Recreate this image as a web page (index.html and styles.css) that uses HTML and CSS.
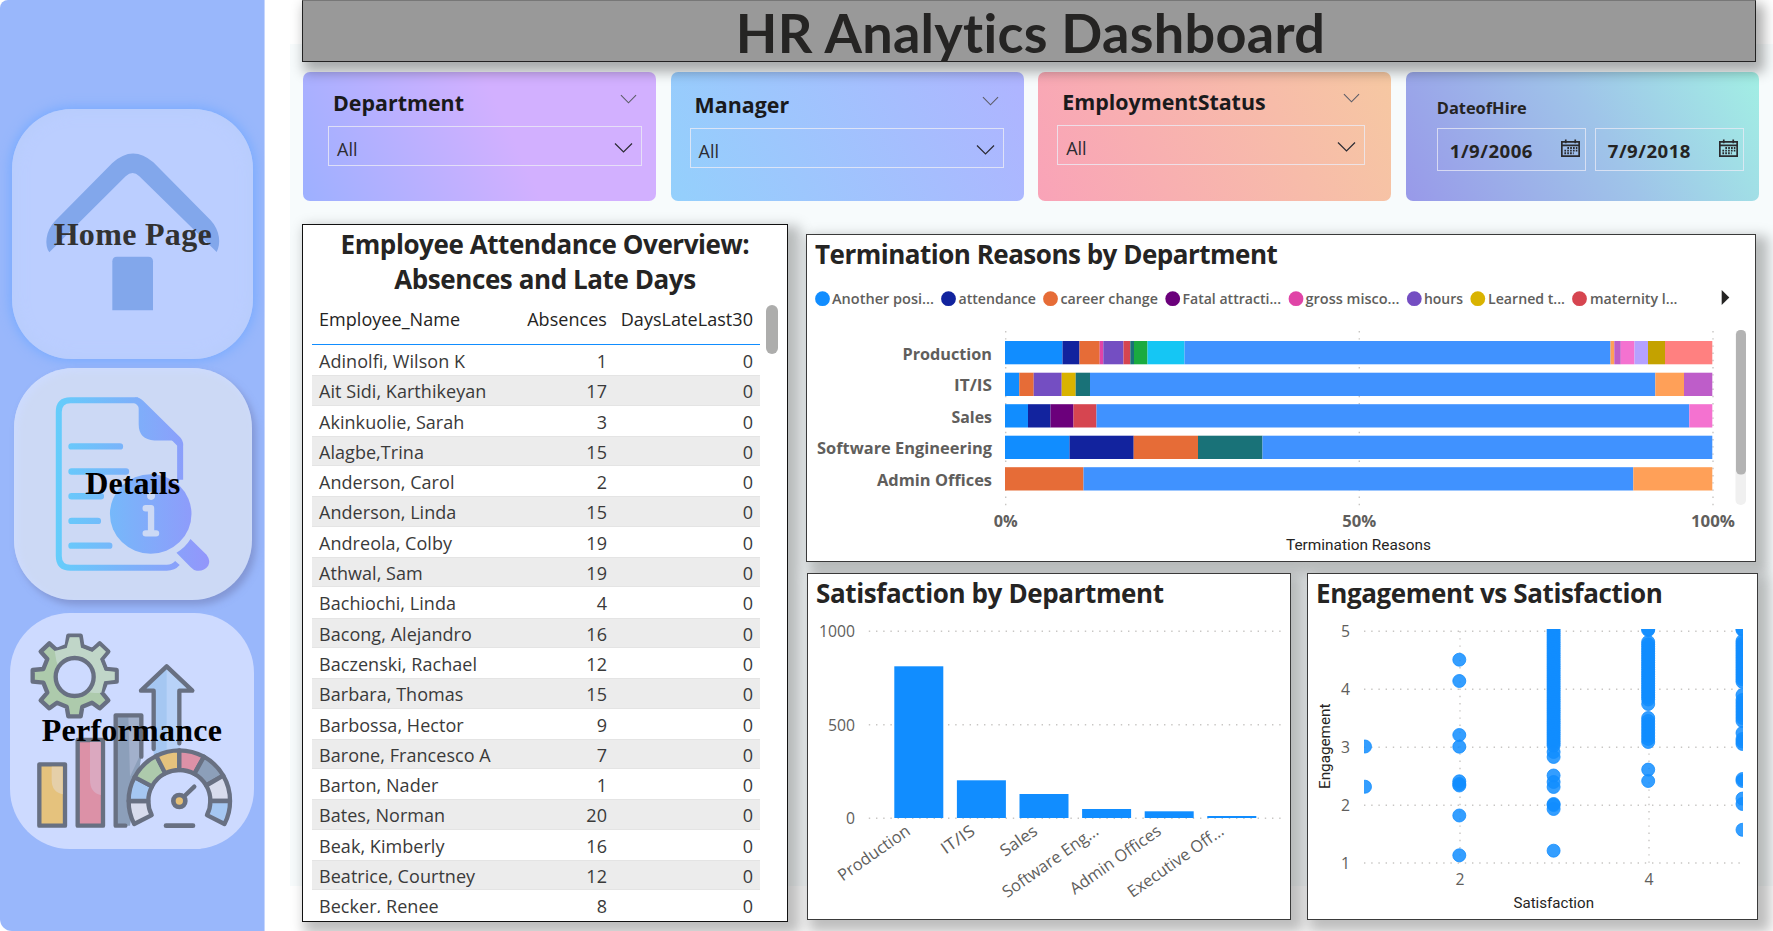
FILE: index.html
```html
<!DOCTYPE html>
<html lang="en">
<head>
<meta charset="utf-8">
<title>HR Analytics Dashboard</title>
<link rel="stylesheet" href="styles.css">
</head>
<body>
<nav class="sidebar">
  <a class="tile tile-home">
    <svg class="tile-art" viewBox="36 88 723 750">
      <path class="house" d="M148 518C133 497 136 455 165 424L337 250Q398 194 460 248L632 422C661 453 663 494 650 517L418 290Q398 270 377 290Z"/>
      <path class="house" d="M337 692V545Q337 531 351 531H445Q459 531 459 545V692Z"/>
      <text class="tile-label soft" x="161" y="496" textLength="474">Home Page</text>
    </svg>
  </a>
  <a class="tile tile-details">
    <svg class="tile-art" viewBox="43 54 712 693">
      <defs>
        <linearGradient id="doc" gradientUnits="userSpaceOnUse" x1="168" y1="0" x2="627" y2="0">
          <stop offset="0" stop-color="#64cdfb"/><stop offset=".5" stop-color="#7db0fa"/><stop offset="1" stop-color="#9396fb"/>
        </linearGradient>
      </defs>
      <path d="M540 388V282L410 150H212Q177 150 177 185V616Q177 651 212 651H500Q520 651 532 637" fill="none" stroke="url(#doc)" stroke-width="18"/>
      <path d="M405 142Q420 142 430 152L540 261Q549 270 549 285H531Q531 270 515 270H463Q416 268 416 222V176Q416 160 403 159Z" fill="url(#doc)"/>
      <path d="M215 288H360M215 363H378M215 437H303M215 511H294M215 585H328" fill="none" stroke="url(#doc)" stroke-width="19" stroke-linecap="round"/>
      <ellipse cx="452" cy="490" rx="122" ry="119" fill="url(#doc)"/>
      <path d="M571 565L619 612Q632 630 624 645Q612 662 590 660Q580 659 571 649L529 606Q556 590 571 565Z" fill="url(#doc)"/>
      <circle cx="453" cy="436" r="12" fill="#ccd9f5"/>
      <path d="M437 473H453V548M437 548H468" fill="none" stroke="#ccd9f5" stroke-width="19" stroke-linecap="round" stroke-linejoin="round"/>
      <text class="tile-label" x="256" y="431" textLength="284">Details</text>
    </svg>
  </a>
  <a class="tile tile-performance">
    <svg class="tile-art" viewBox="30 69 732 708">
      <g stroke="#687082" stroke-width="13" stroke-linejoin="round" stroke-linecap="round">
        <path fill="#adcaac" d="M205 137H242L247 168L277 180L299 160L325 185L306 207L318 237L350 240V275L318 278L306 308L325 331L299 355L276 338L247 350L242 379H205L200 350L171 338L148 355L122 331L142 308L130 278L98 275V240L130 237L142 207L122 185L148 160L170 180L200 168Z"/>
        <path fill="#c0d6c8" stroke="none" d="M164 183L200 174L209 142H238L243 173L277 186L299 167L318 185L300 207L314 242L344 245V270L312 274L304 308Q180 320 164 183Z"/>
        <circle cx="224" cy="261" r="57" fill="#cddaff"/>
        <path fill="#a5c7f2" stroke="none" d="M461 500V302H423L500 229L577 302H538V500Z"/>
        <path fill="#b8d2f8" stroke="none" d="M500 229L577 302H538V500H500Z"/>
        <path fill="none" d="M461 477V302H423L500 229L577 302H538V460"/>
        <path fill="#8c9fba" stroke="none" d="M347 376H424V500L390 707H347Z"/>
        <path fill="#a2b0cb" stroke="none" d="M385 382H418V500L390 560Z"/>
        <path fill="none" d="M424 500V376H347V707H376"/>
        <path fill="#dc91a7" d="M233 450H309V707H233Z"/>
        <path fill="#dba8bf" stroke="none" d="M270 456H302V615Q270 608 270 570Z"/>
        <path fill="#e5c27d" d="M118 523H195V707H118Z"/>
        <path fill="#e5cfa9" stroke="none" d="M155 530H188V613Q155 606 155 570Z"/>
      </g>
      <g id="gauge" stroke="#687082" stroke-width="13" stroke-linejoin="round"></g>
      <path d="M538 633L583 590" stroke="#687082" stroke-width="13" stroke-linecap="round"/>
      <circle cx="538" cy="633" r="18" fill="#e5bf76" stroke="#687082" stroke-width="14"/>
      <path d="M498 707H579" stroke="#687082" stroke-width="14" stroke-linecap="round"/>
      <text class="tile-label" x="125" y="452" textLength="541">Performance</text>
    </svg>
  </a>
</nav>

<main class="main">
  <header class="banner"><h1>HR Analytics Dashboard</h1></header>

  <section class="slicers">
    <div class="slicer department">
      <div class="slicer-head"><span>Department</span><svg class="chev small" viewBox="0 0 18 10"><path d="M1 1L9 9L17 1"/></svg></div>
      <div class="select"><span>All</span><svg class="chev" viewBox="0 0 18 10"><path d="M.5 .5L9 9L17.5 .5"/></svg></div>
    </div>
    <div class="slicer manager">
      <div class="slicer-head"><span>Manager</span><svg class="chev small" viewBox="0 0 18 10"><path d="M1 1L9 9L17 1"/></svg></div>
      <div class="select"><span>All</span><svg class="chev" viewBox="0 0 18 10"><path d="M.5 .5L9 9L17.5 .5"/></svg></div>
    </div>
    <div class="slicer status">
      <div class="slicer-head"><span>EmploymentStatus</span><svg class="chev small" viewBox="0 0 18 10"><path d="M1 1L9 9L17 1"/></svg></div>
      <div class="select"><span>All</span><svg class="chev" viewBox="0 0 18 10"><path d="M.5 .5L9 9L17.5 .5"/></svg></div>
    </div>
    <div class="slicer hire">
      <div class="hire-head">DateofHire</div>
      <div class="dates">
        <div class="date"><span>1/9/2006</span><svg class="cal" viewBox="0 0 18 18"><path d="M.8 2.8H17.2V16.2H.8ZM.8 6H17.2M4.5 .5V4M13.5 .5V4"/><path class="days" d="M6 8.5H15.5M3.2 11H15.5M3.2 13.5H12"/></svg></div>
        <div class="date"><span>7/9/2018</span><svg class="cal" viewBox="0 0 18 18"><path d="M.8 2.8H17.2V16.2H.8ZM.8 6H17.2M4.5 .5V4M13.5 .5V4"/><path class="days" d="M6 8.5H15.5M3.2 11H15.5M3.2 13.5H12"/></svg></div>
      </div>
    </div>
  </section>

  <div class="content">
    <section class="panel attendance">
      <h2>Employee Attendance Overview:<br>Absences and Late Days</h2>
      <div class="table-wrap">
        <div class="table">
          <div class="row head"><span>Employee_Name</span><span>Absences</span><span>DaysLateLast30</span></div>
          <div class="rows" id="rows"></div>
        </div>
        <div class="thumb"></div>
      </div>
    </section>

    <div class="charts">
      <section class="panel termination">
        <h2>Termination Reasons by Department</h2>
        <svg id="termination" width="948" height="276" viewBox="807 285 948 276"></svg>
      </section>
      <div class="bottom">
        <section class="panel satisfaction">
          <h2>Satisfaction by Department</h2>
          <svg id="satisfaction" width="482" height="297" viewBox="808 622 482 297"></svg>
        </section>
        <section class="panel engagement">
          <h2>Engagement vs Satisfaction</h2>
          <svg id="engagement" width="449" height="297" viewBox="1308 622 449 297"></svg>
        </section>
      </div>
    </div>
  </div>
</main>
<script src="script.js"></script>
</body>
</html>
```
FILE: styles.css
```css
* { box-sizing: border-box; }
body {
  margin: 0;
  width: 1773px;
  height: 931px;
  overflow: hidden;
  display: flex;
  background: #fff;
  font-family: "Open Sans", "Noto Sans", sans-serif;
  color: #252423;
}
h1, h2 { margin: 0; }

.sidebar {
  width: 265px;
  height: 931px;
  flex: none;
  padding-top: 109px;
  background: #99b7fb;
  border-right: 1px solid #c6d6fd;
  border-radius: 8px 0 0 12px;
}
.tile { display: block; border-radius: 60px; }
.tile-art { display: block; width: 100%; height: 100%; }
.tile-home {
  width: 241px; height: 250px; margin-left: 12px;
  background: #bbceff;
  box-shadow: 0 0 12px 2px #78abff, inset 0 0 16px 2px #b7ccfb;
}
.tile-details {
  width: 238px; height: 232px; margin: 9px 0 0 14px;
  background: #ccd9f5;
  box-shadow: 4px 5px 7px rgba(110, 120, 175, .5), inset 3px 3px 8px #cddbff;
}
.tile-performance {
  width: 244px; height: 236px; margin: 13px 0 0 10px;
  background: #cddaff;
}
.tile-label { font: bold 96px "Liberation Serif", serif; fill: #000; }
.tile-label.soft { fill: #323232; }
.house { fill: #82a7eb; }

.main {
  flex: 1;
  padding-left: 37px;
  background: linear-gradient(#f7fbfc, #f7fbfc) 25px 44px / 1483px 842px no-repeat #fff;
}
.banner {
  position: relative;
  z-index: 1;
  width: 1454px;
  height: 62px;
  border: 1px solid #222;
  border-top-color: #777;
  background: #999;
  box-shadow: 5px 7px 12px 3px rgba(0, 0, 0, .32);
  display: flex;
  justify-content: center;
}
.banner h1 {
  font-family: Lato, "Open Sans", sans-serif;
  font-size: 54px;
  font-weight: 700;
  line-height: 63px;
  letter-spacing: .3px;
  padding-left: 3px;
  white-space: nowrap;
}

.slicers {
  margin: 10px 0 0 1px;
  display: grid;
  grid-template-columns: repeat(4, 353px);
  column-gap: 14.6px;
}
.slicer { height: 129px; border-radius: 7px; }
.department { background: linear-gradient(65deg, #9db0ff, #d2b0ff 58%); padding: 23px 14px 0 25px; }
.manager { background: linear-gradient(65deg, #94d0fc, #afb4ff); padding: 25px 20px 0 19px; }
.status { background: linear-gradient(65deg, #f9a3b8, #f6c8a2); padding: 22px 26px 0 19px; }
.hire { background: linear-gradient(60deg, #9899e9, #9fc4e9 55%, #a2efe4); padding: 27px 14px 0 31px; }
.slicer-head {
  display: flex;
  justify-content: space-between;
  height: 31px;
  padding-left: 5px;
  font-size: 21.4px;
  font-weight: 700;
  line-height: 16px;
  color: #1a1a1c;
}
.chev { width: 19px; height: 10px; fill: none; stroke: #2b2b33; stroke-width: 1.2; }
.chev.small { width: 17px; height: 10px; margin: -1px 5px 0 0; stroke: #5d5d68; }
.select {
  height: 40px;
  border: 1px solid rgba(235, 235, 245, .8);
  padding: 5px 8px 0 8px;
  display: flex;
  justify-content: space-between;
  align-items: center;
  font-size: 18px;
  line-height: 34px;
  color: #2c2c33;
}
.select .chev { margin-top: -1px; }
.hire-head { height: 29px; font-size: 16.4px; font-weight: 700; line-height: 17px; }
.dates { display: grid; grid-template-columns: 149px 149px; column-gap: 9px; }
.date {
  height: 43px;
  border: 1px solid rgba(235, 235, 245, .75);
  padding: 2px 5px 0 12px;
  display: flex;
  justify-content: space-between;
  align-items: center;
  font-size: 18.6px;
  letter-spacing: .5px;
  font-weight: 700;
}
.cal { width: 19px; height: 19px; margin-bottom: 4px; fill: none; stroke: #2a2a2e; stroke-width: 1.6; }
.cal .days { stroke-dasharray: 1.6 1.1; stroke-width: 1.8; }

.content { display: flex; margin-top: 23px; }
.panel {
  background: #fff;
  border: 1px solid #3a3a3a;
  box-shadow: 7px 7px 12px 5px rgba(0, 0, 0, .26);
}
.panel h2 { font-size: 26px; font-weight: 700; letter-spacing: -.5px; white-space: nowrap; }
.bottom h2 { font-size: 26px; }
.panel svg { display: block; }
.attendance { width: 486px; height: 698px; padding: 2px 9px 0; border-color: #111; }
.attendance h2 { text-align: center; line-height: 35px; letter-spacing: -.42px; }
.table-wrap { display: flex; height: 617px; }
.table { width: 449px; margin-top: 10px; overflow: hidden; height: 606px; font-size: 18px; letter-spacing: .05px; }
.row {
  display: grid;
  grid-template-columns: 201px 87px 146px;
  padding-left: 7px;
  height: 30.3px;
  line-height: 32px;
  color: #3a3a3a;
  white-space: nowrap;
}
.row span + span { text-align: right; }
.head { height: 38px; line-height: 25px; border-bottom: 1px solid #118dff; color: #252423; }
.rows .row:nth-child(even) { background: #ececec; box-shadow: inset 0 1px #e4e4e4, inset 0 -1px #e4e4e4; }
.thumb { width: 12px; height: 49px; margin: 8px 0 0 6px; border-radius: 6px; background: #adadac; }

.charts { margin-left: 18px; padding-top: 10px; }
.termination { width: 950px; height: 328px; }
.termination h2 { height: 50px; line-height: 38px; padding-left: 8px; }
.bottom { display: flex; gap: 16px; margin: 11px 0 0 1px; }
.satisfaction { width: 484px; height: 347px; }
.engagement { width: 451px; height: 347px; }
.bottom .panel h2 { height: 48px; line-height: 39px; padding-left: 8px; letter-spacing: -.38px; }

.legend { font-size: 14.7px; font-weight: 600; fill: #605e5c; }
.category { font-size: 16.5px; font-weight: 700; fill: #605e5c; }
.tick { font-size: 16.5px; fill: #605e5c; }
.tick-bold { font-size: 16.5px; font-weight: 700; fill: #605e5c; }
.axis-title { font-family: Roboto, sans-serif; font-size: 14.7px; fill: #252423; }
.grid { stroke: #c8c6c4; stroke-width: 1.4; stroke-dasharray: 1.4 5.8; }
.dot { fill: #118dff; fill-opacity: .85; stroke: #118dff; stroke-width: .8; }
```
FILE: script.js
```js
const people = [
  ["Adinolfi, Wilson K", 1], ["Ait Sidi, Karthikeyan", 17], ["Akinkuolie, Sarah", 3],
  ["Alagbe,Trina", 15], ["Anderson, Carol", 2], ["Anderson, Linda", 15],
  ["Andreola, Colby", 19], ["Athwal, Sam", 19], ["Bachiochi, Linda", 4],
  ["Bacong, Alejandro", 16], ["Baczenski, Rachael", 12], ["Barbara, Thomas", 15],
  ["Barbossa, Hector", 9], ["Barone, Francesco A", 7], ["Barton, Nader", 1],
  ["Bates, Norman", 20], ["Beak, Kimberly", 16], ["Beatrice, Courtney", 12], ["Becker, Renee", 8]
];
document.getElementById("rows").innerHTML = people
  .map(([n, a]) => `<div class="row"><span>${n}</span><span>${a}</span><span>0</span></div>`).join("");

const text = (cls, x, y, s, len, anchor = "start", extra = "") =>
  `<text class="${cls}" x="${x}" y="${y}" text-anchor="${anchor}"${len ? ` textLength="${len}" lengthAdjust="spacingAndGlyphs"` : ""} ${extra}>${s}</text>`;
const line = (x1, y1, x2, y2) => `<line class="grid" x1="${x1}" y1="${y1}" x2="${x2}" y2="${y2}"/>`;

/* Termination reasons: 100% stacked bars */
const legend = [
  [822.5, 832, 102, "Another posi...", "#118dff"], [948.5, 958.5, 77.5, "attendance", "#12239e"],
  [1050.5, 1060.5, 97.5, "career change", "#e66c37"], [1172.7, 1182.5, 98.5, "Fatal attracti...", "#6b007b"],
  [1296, 1305.5, 94, "gross misco...", "#e044a7"], [1414.3, 1424, 39, "hours", "#744ec2"],
  [1477.8, 1488, 77, "Learned t...", "#d9b300"], [1579.5, 1590, 87.5, "maternity l...", "#d64550"]
];
const stacks = [
  ["Production", 89.5, 341, [[1062.5, "#118dff"], [1079.5, "#12239e"], [1099.7, "#e66c37"], [1103.3, "#e044a7"],
    [1123.5, "#744ec2"], [1130.3, "#d64550"], [1134, "#197278"], [1147.5, "#1aab40"], [1184.5, "#15c6f4"],
    [1610.5, "#4092ff"], [1614.3, "#ffa058"], [1620.8, "#be5dc9"], [1634.5, "#f472d0"], [1648, "#b5a1ff"],
    [1665, "#c4a200"], [1712.3, "#ff8080"]]],
  ["IT/IS", 38, 372.7, [[1019.3, "#118dff"], [1033.7, "#e66c37"], [1061.7, "#744ec2"], [1075.7, "#d9b300"],
    [1090, "#197278"], [1655.3, "#4092ff"], [1684, "#ffa058"], [1712.3, "#be5dc9"]]],
  ["Sales", 40.5, 404.2, [[1028, "#118dff"], [1050.5, "#12239e"], [1073.5, "#6b007b"], [1096.5, "#d64550"],
    [1689.3, "#4092ff"], [1712.3, "#f472d0"]]],
  ["Software Engineering", 175, 435.7, [[1069.5, "#118dff"], [1133.7, "#12239e"], [1198, "#e66c37"],
    [1262.5, "#197278"], [1712.3, "#4092ff"]]],
  ["Admin Offices", 115, 467.2, [[1083.5, "#e66c37"], [1633.3, "#4092ff"], [1712.3, "#ffa058"]]]
];
let out = "";
for (const [cx, tx, w, s, c] of legend)
  out += `<circle cx="${cx}" cy="298.7" r="7.4" fill="${c}"/>` + text("legend", tx, 304.3, s, w);
out += `<path d="M1721.7 290L1729.3 297.5L1721.7 305Z" fill="#252423"/>`;
for (const x of [1005.7, 1359.3, 1713]) out += line(x, 331, x, 506);
for (const [name, w, y, parts] of stacks) {
  let x = 1005;
  out += text("category", 992, y + 18.5, name, w, "end");
  for (const [end, c] of parts) {
    out += `<rect x="${x}" y="${y}" width="${end - x}" height="23.3" fill="${c}"/>`;
    x = end;
  }
}
out += text("tick-bold", 1005.7, 527, "0%", 24, "middle") + text("tick-bold", 1359.3, 527, "50%", 34, "middle") +
  text("tick-bold", 1713, 527, "100%", 44, "middle") + text("axis-title", 1286, 550, "Termination Reasons", 145) +
  `<rect x="1735.5" y="330" width="10.5" height="175" rx="5" fill="#f0f0f0"/><rect x="1736" y="330" width="10" height="144.5" rx="4.5" fill="#b3b3b3"/>`;
document.getElementById("termination").innerHTML = out;

/* Satisfaction: column chart */
out = "";
for (const [y, s, w] of [[631.3, "1000", 36], [724.7, "500", 27], [818.3, "0", 9]])
  out += line(868.8, y, 1283, y) + text("tick", 855, y + 5.8, s, w, "end");
[["Production", 666.3, 84, 0], ["IT/IS", 780.3, 37, 2], ["Sales", 794, 41, 2], ["Software Eng...", 809, 113, .5],
 ["Admin Offices", 811.3, 107, .5], ["Executive Off...", 816, 113, .5]].forEach(([s, y, w, dx], i) => {
  const x = 894.3 + i * 62.6, lx = 911.5 + i * 62.6 + dx, ly = 833.5;
  out += `<rect x="${x}" y="${y}" width="49" height="${818 - y}" fill="#118dff"/>` +
    text("tick", lx, ly, s, w, "end", `transform="rotate(-35 ${lx} ${ly})"`);
});
document.getElementById("satisfaction").innerHTML = out;

/* Engagement vs satisfaction: scatter */
out = `<defs><clipPath id="plot"><rect x="1364" y="629" width="379" height="240"/></clipPath></defs>`;
[631.3, 689.3, 747.3, 805.3, 863].forEach((y, i) => {
  out += line(1364, y, 1742, y) + text("tick", 1350, y + 6, 5 - i, 9, "end");
});
out += line(1460, 631, 1460, 864) + line(1649, 631, 1649, 864);
const range = (a, b, step) => { const r = []; for (let v = a; v <= b; v += step) r.push(v); return r; };
const dots = {
  1365: [746.5, 786.7],
  1459.3: [659.7, 681, 735, 746.7, 781.3, 784, 785.5, 815.5, 855.3],
  1553.6: [...range(629, 746, 2.2), 752, 757, 775.5, 782, 787, 804, 805, 809, 850.7],
  1648.2: [629, 630, ...range(642, 700, 2.3), 704, ...range(718, 742, 3), 769.6, 781],
  1742.5: [629, 630, ...range(641, 682, 2.4), 695, ...range(700, 723, 3), 733, ...range(739, 746, 2.5), 779, 781, 798.6, 804, 829.8]
};
out += `<g clip-path="url(#plot)">`;
for (const x in dots) for (const y of dots[x]) out += `<circle class="dot" cx="${x}" cy="${y}" r="6.5"/>`;
out += `</g>` + text("tick", 1460, 884.5, "2", 9, "middle") + text("tick", 1649, 884.5, "4", 9, "middle") +
  text("axis-title", 1513.5, 908, "Satisfaction", 80.5) +
  text("axis-title", 1329.5, 789, "Engagement", 85.5, "start", `transform="rotate(-90 1329.5 789)"`);
document.getElementById("engagement").innerHTML = out;

/* Gauge segments, measured clockwise from the lower-left end */
const angles = [207, 180, 152, 117, 90, 61, 30, 0, -27];
const fills = ["#d8dced", "#a5c7f2", "#adcaac", "#e5c27d", "#dc91a7", "#8c9fba", "#d8dced", "#a5c7f2"];
const at = (r, deg) => {
  const a = deg * Math.PI / 180;
  return `${(538 + r * Math.cos(a)).toFixed(1)} ${(633 - r * Math.sin(a)).toFixed(1)}`;
};
let gauge = `<circle cx="538" cy="640" r="150" fill="#cddaff" stroke="none"/>`;
fills.forEach((f, i) => {
  const a = angles[i], b = angles[i + 1];
  gauge += `<path fill="${f}" d="M${at(152, a)}A152 147 0 0 1 ${at(152, b)}L${at(93, b)}A93 90 0 0 0 ${at(93, a)}Z"/>`;
});
document.getElementById("gauge").innerHTML = gauge;
```
